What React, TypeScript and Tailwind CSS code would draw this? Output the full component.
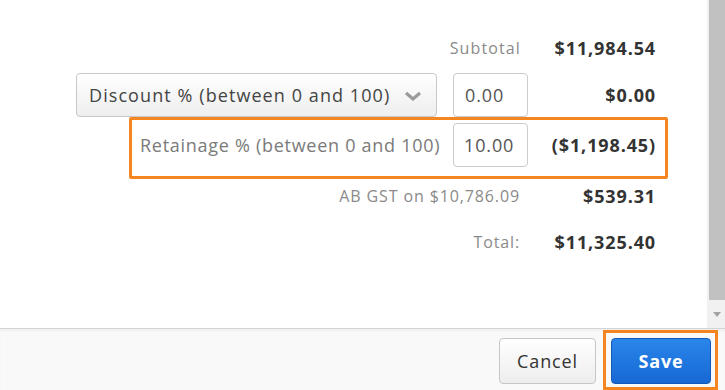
import React from "react";

const font = { fontFamily: '"Open Sans", "Liberation Sans", sans-serif' };

export default function App() {
  return (
    <div className="w-[725px] h-[390px] bg-white overflow-hidden flex flex-col tracking-[0.055em]" style={font}>
      <div className="h-[328px] flex">
        <div className="flex-1 flex flex-col">
          {/* Subtotal */}
          <div className="mt-[36px] h-[24px] flex items-center justify-end pr-[52px]">
            <span className="text-[16px] text-[#8a8a8a] mr-[17px] tracking-[0.07em]">Subtotal</span>
            <span className="w-[118px] text-right text-[18px] font-bold text-[#333] -mr-[1px]">$11,984.54</span>
          </div>
          {/* Discount */}
          <div className="mt-[13px] h-[44px] flex items-center pl-[76px] pr-[52px]">
            <div className="w-[361px] h-[44px] rounded-[4px] border border-[#c8c8c8] bg-gradient-to-b from-[#ffffff] to-[#eeeeee] flex items-center pl-[12px] pr-[14px]">
              <span className="text-[18px] text-[#444] flex-1 whitespace-nowrap tracking-[0.06em]">Discount % (between 0 and 100)</span>
              <svg width="18" height="12" viewBox="0 0 18 12" className="mt-[2px]">
                <polyline points="2,3 9,9 16,3" fill="none" stroke="#9a9a9a" strokeWidth="3.2" />
              </svg>
            </div>
            <div className="ml-[16px] w-[75px] h-[44px] rounded-[4px] border border-[#cccccc] bg-white flex items-center pl-[11px] text-[18px] text-[#555]">0.00</div>
            <span className="flex-1 text-right text-[18px] font-bold text-[#333] -mr-[1px]">$0.00</span>
          </div>
          {/* Retainage highlighted */}
          <div className="ml-[129px] mr-[39px] h-[62px] border-[3px] border-[#f5861f] rounded-[2px] flex items-center pt-[3px] pb-[9px] pl-[8px] pr-[10px]">
            <span className="w-[313px] shrink-0 text-[18px] text-[#7a7a7a] whitespace-nowrap tracking-[0.04em]">Retainage % (between 0 and 100)</span>
            <div className="w-[75px] h-[44px] shrink-0 rounded-[4px] border border-[#cccccc] bg-white flex items-center pl-[10px] text-[18px] text-[#555]">10.00</div>
            <span className="flex-1 text-right text-[18px] font-bold text-[#333] -mr-[1px]">($1,198.45)</span>
          </div>
          {/* GST */}
          <div className="mt-[5px] h-[24px] flex items-center justify-end pr-[52px]">
            <span className="text-[16px] text-[#8a8a8a] mr-[18px]">AB GST on $10,786.09</span>
            <span className="w-[118px] text-right text-[18px] font-bold text-[#333] -mr-[1px]">$539.31</span>
          </div>
          {/* Total */}
          <div className="mt-[22px] h-[24px] flex items-center justify-end pr-[52px]">
            <span className="text-[16px] text-[#8a8a8a] mr-[18px]">Total:</span>
            <span className="w-[118px] text-right text-[18px] font-bold text-[#333] -mr-[1px]">$11,325.40</span>
          </div>
        </div>
        {/* scrollbar */}
        <div className="w-[18px] h-full bg-[#f1f1f1] flex flex-col pl-[2px]">
          <div className="flex-1 bg-[#c1c1c1]" />
          <div className="h-[28px] flex items-center justify-center">
            <svg width="8" height="5" viewBox="0 0 8 5">
              <polygon points="0,0 8,0 4,5" fill="#a3a3a3" />
            </svg>
          </div>
        </div>
      </div>
      {/* footer */}
      <div className="flex-1 border-t border-[#d4d4d4] bg-[#f9f9f9] flex items-end justify-end pr-[7px] shadow-[inset_0_2px_2px_rgba(0,0,0,0.04)]">
        <div className="mb-[6px] mr-[7px] w-[97px] h-[46px] rounded-[4px] border border-[#c6c6c6] bg-gradient-to-b from-[#ffffff] to-[#ededed] flex items-center justify-center text-[18px] text-[#333]">Cancel</div>
        <div className="w-[115px] h-[60px] border-[3px] border-[#f5861f] pt-[5px] pl-[5px]">
          <div className="w-[100px] h-[46px] rounded-[4px] border border-[#1559b8] bg-gradient-to-b from-[#2a86ea] to-[#1768d4] flex items-center justify-center text-[18px] font-bold text-white">Save</div>
        </div>
      </div>
    </div>
  );
}
